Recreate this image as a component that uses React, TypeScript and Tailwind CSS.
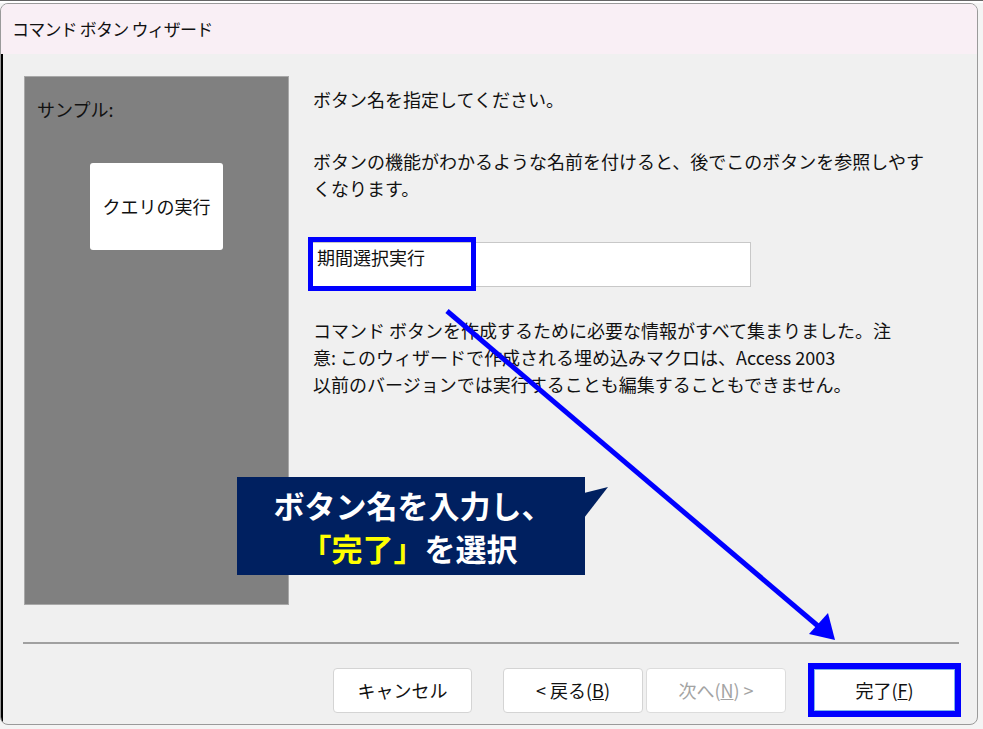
export default function App() {
  return (
    <div
      className="relative w-[983px] h-[729px] overflow-hidden bg-[#f4f4f4] text-[#111]"
      style={{ fontFamily: '"Noto Sans CJK JP", "Noto Sans", sans-serif' }}
    >
      {/* ruler strip at top */}
      <div className="h-[3px] border-t border-[#666] bg-white" />

      {/* dialog window */}
      <div className="w-[978px] h-[722px] rounded-[8px] border border-[#9a9a9a] overflow-hidden bg-[#f0f0f0] flex flex-col">
        <div className="h-[50px] shrink-0 bg-[#f9eff5] flex items-center pl-[11px] text-[17px] tracking-[-0.8px]">
          コマンド ボタン ウィザード
        </div>

        <div className="flex-1 flex flex-col border-l-2 border-black">
          <div className="flex pt-[22px] pl-[21px]">
            {/* sample panel */}
            <div className="w-[265px] h-[529px] shrink-0 bg-[#808080] border border-[#a8a8a8] pt-[19px] pl-[12px] pr-[12px]">
              <div className="text-[18px] leading-[27px]">サンプル:</div>
              <div className="mt-[40px] mx-auto w-[133px] h-[87px] bg-white rounded-[3px] flex items-center justify-center text-[18px]">
                クエリの実行
              </div>
            </div>

            {/* right column */}
            <div className="ml-[21px] pt-[10px] text-[18px] leading-[27px] whitespace-nowrap">
              <p className="pl-[3px]">ボタン名を指定してください。</p>
              <p className="pl-[3px] mt-[35px]">
                ボタンの機能がわかるような名前を付けると、後でこのボタンを参照しやす
                <br />
                くなります。
              </p>
              <div className="mt-[40px] w-[441px] h-[45px] bg-white border border-[#c8c8c8] pl-[6px] pt-[1px]">
                期間選択実行
              </div>
              <p className="pl-[3px] mt-[30px]">
                コマンド ボタンを作成するために必要な情報がすべて集まりました。注
                <br />
                意: このウィザードで作成される埋め込みマクロは、Access 2003
                <br />
                以前のバージョンでは実行することも編集することもできません。
              </p>
            </div>
          </div>

          {/* separator */}
          <div className="ml-[20px] mt-[37px] w-[936px] border-t-2 border-[#a0a0a0]" />

          {/* buttons */}
          <div className="flex items-center mt-[19px] text-[18px]">
            <button className="ml-[330px] w-[139px] h-[45px] bg-white border border-[#d4d4d4] rounded-[4px]">
              キャンセル
            </button>
            <button className="ml-[31px] w-[140px] h-[45px] bg-white border border-[#d4d4d4] rounded-[4px]">
              &lt; 戻る(<span className="underline">B</span>)
            </button>
            <button className="ml-[3px] w-[140px] h-[45px] bg-white border border-[#dcdcdc] rounded-[4px] text-[#a3a3a3]">
              次へ(<span className="underline">N</span>) &gt;
            </button>
            <div className="ml-[22px] w-[153px] h-[54px] border-[6px] border-[#0000ff] bg-white">
              <button className="w-full h-full border border-[#7fb4e8] bg-white">
                完了(<span className="underline">F</span>)
              </button>
            </div>
          </div>
        </div>
      </div>

      {/* highlight around the entered name */}
      <div className="absolute left-[308px] top-[237px] w-[168px] h-[54px] border-[5px] border-[#0000ff]" />

      {/* callout */}
      <div className="absolute left-[237px] top-[477px] w-[348px] h-[98px] bg-[#002060] flex flex-col items-center justify-center text-white font-bold text-[31px] leading-[43px]">
        <div className="pl-[4px]">ボタン名を入力し、</div>
        <div className="pr-[4px]">
          <span className="text-[#ffff00]">「完了」</span>を選択
        </div>
      </div>

      {/* callout tail and arrow */}
      <svg className="absolute left-0 top-0 pointer-events-none" width="983" height="729" viewBox="0 0 983 729">
        <polygon points="584,493 608,487 584,518" fill="#002060" />
        <line x1="447" y1="311" x2="818" y2="626" stroke="#0000ff" strokeWidth="5" />
        <polygon points="835,640 809,634 828,613" fill="#0000ff" />
      </svg>
    </div>
  );
}
